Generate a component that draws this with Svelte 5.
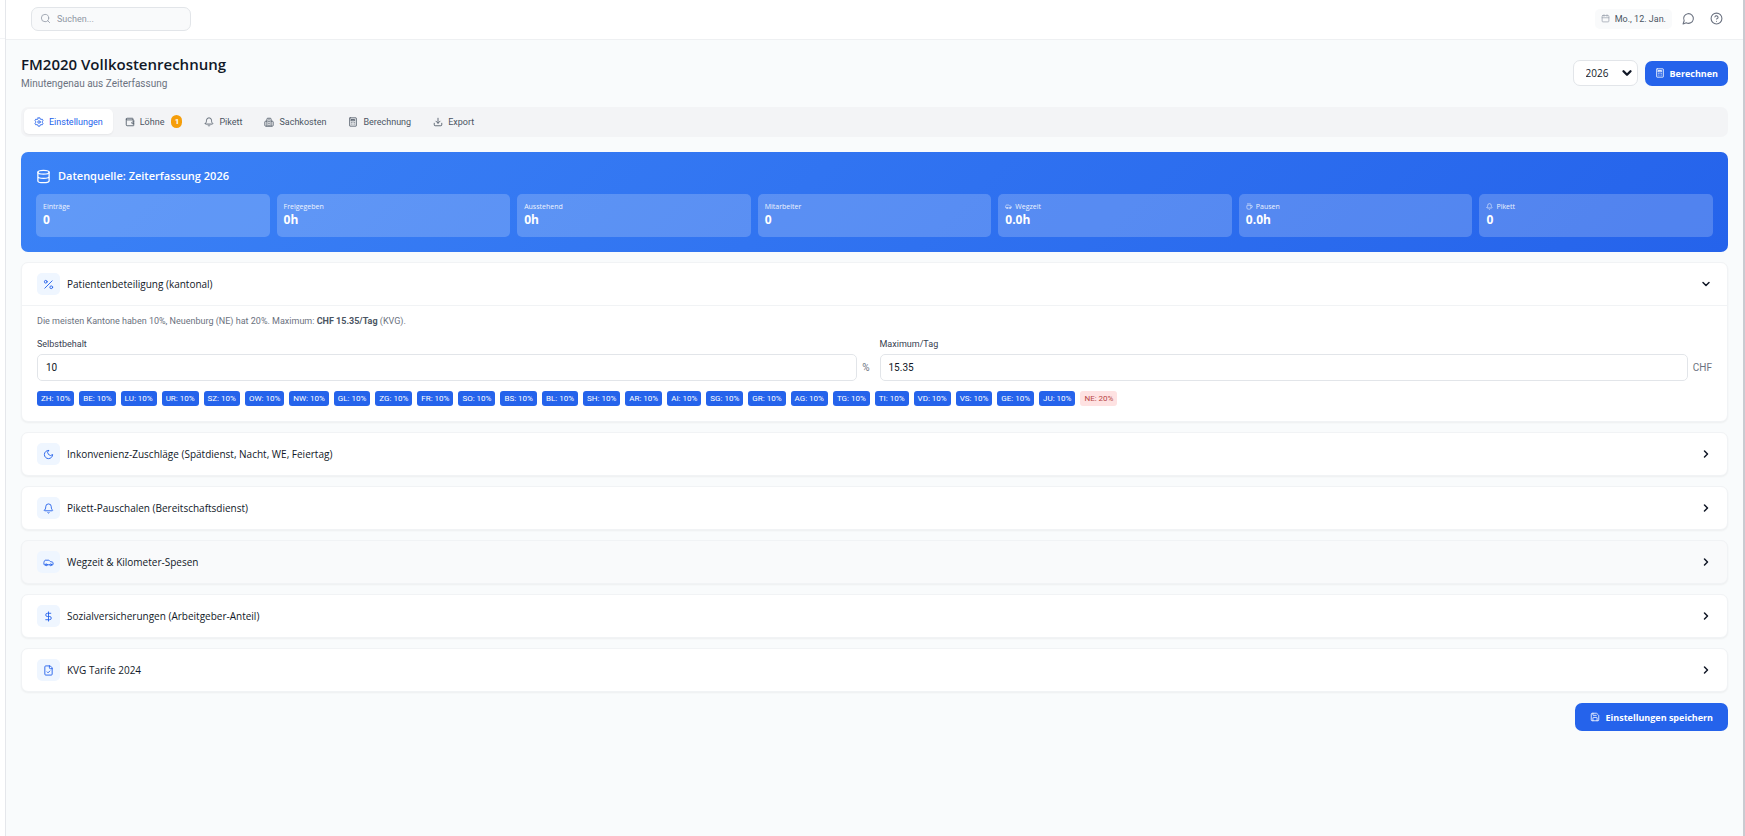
<script>
  const icons = {
    search: '<circle cx="11" cy="11" r="8"/><path d="m21 21-4.3-4.3"/>',
    calendar: '<rect x="3" y="4" width="18" height="17" rx="2"/><path d="M8 2v4M16 2v4M3 10h18"/>',
    chat: '<path d="M7.9 20A9 9 0 1 0 4 16.1L2 22Z"/>',
    help: '<circle cx="12" cy="12" r="10"/><path d="M9.1 9a3 3 0 0 1 5.8 1c0 2-3 3-3 3M12 17h.01"/>',
    calculator: '<rect x="4" y="2" width="16" height="20" rx="1"/><path d="M8 6h8v3H8zM8 13h.01M12 13h.01M16 13h.01M8 17h.01M12 17h.01M16 17h.01"/>',
    settings: '<path d="M9.700 2h4.600l.6 3 1.800 1 2.900-1 2.300 4-2.300 2v2l2.300 2-2.300 4-2.900-1-1.800 1-.6 3H9.700l-.6-3-1.800-1-2.900 1-2.300-4 2.300-2v-2L2.100 9l2.300-4 2.900 1 1.800-1z"/><circle cx="12" cy="12" r="3"/>',
    wallet: '<path d="M19 7V4a1 1 0 0 0-1-1H5a2 2 0 0 0 0 4h15a1 1 0 0 1 1 1v4h-3a2 2 0 0 0 0 4h3v4a1 1 0 0 1-1 1H5a2 2 0 0 1-2-2V5M21 12v4"/>',
    bell: '<path d="M10.3 21a1.9 1.9 0 0 0 3.4 0M3.3 15.3A1 1 0 0 0 4 17h16a1 1 0 0 0 .7-1.7C19.400 14 18 12.500 18 8A6 6 0 0 0 6 8c0 4.500-1.400 6-2.700 7.300"/>',
    building: '<path d="M7 22V5a2 2 0 0 1 2-2h6a2 2 0 0 1 2 2v17M7 10H4a2 2 0 0 0-2 2v8a2 2 0 0 0 2 2h16a2 2 0 0 0 2-2v-8a2 2 0 0 0-2-2h-3M11 7h2M11 11h2M11 15h2M12 19v3"/>',
    download: '<path d="M21 15v4a2 2 0 0 1-2 2H5a2 2 0 0 1-2-2v-4M7 10l5 5 5-5M12 15V3"/>',
    database: '<ellipse cx="12" cy="5" rx="9" ry="3"/><path d="M3 5v14a9 3 0 0 0 18 0V5M3 12a9 3 0 0 0 18 0"/>',
    car: '<path d="M19 17h2c.6 0 1-.4 1-1v-3c0-.9-.7-1.700-1.500-1.900L16 10s-1.300-1.400-2.200-2.300c-.5-.4-1.100-.7-1.800-.7H5c-.6 0-1.100.4-1.400.9l-1.400 2.900A3.700 3.700 0 0 0 2 12v4c0 .6.4 1 1 1h2M9 17h6"/><circle cx="7" cy="17" r="2"/><circle cx="17" cy="17" r="2"/>',
    coffee: '<path d="M10 2v2M14 2v2M6 2v2M16 8a1 1 0 0 1 1 1v8a4 4 0 0 1-4 4H7a4 4 0 0 1-4-4V9a1 1 0 0 1 1-1h14a4 4 0 1 1 0 8h-1"/>',
    percent: '<path d="M20 4 4 20"/><circle cx="6" cy="6" r="3"/><circle cx="18" cy="18" r="3"/>',
    moon: '<path d="M12 3a6 6 0 0 0 9 9 9 9 0 1 1-9-9Z"/>',
    dollar: '<path d="M12 2v20M17 5H9.500a3.500 3.500 0 0 0 0 7h5a3.500 3.500 0 0 1 0 7H6"/>',
    fileCheck: '<path d="M15 2H6a2 2 0 0 0-2 2v16a2 2 0 0 0 2 2h12a2 2 0 0 0 2-2V7ZM14 2v4a2 2 0 0 0 2 2h4M9 15l2 2 4-4"/>',
    save: '<path d="M15.200 3a2 2 0 0 1 1.400.6l3.800 3.800a2 2 0 0 1 .6 1.400V19a2 2 0 0 1-2 2H5a2 2 0 0 1-2-2V5a2 2 0 0 1 2-2ZM17 21v-7a1 1 0 0 0-1-1H8a1 1 0 0 0-1 1v7M7 3v4a1 1 0 0 0 1 1h7"/>',
    chevronDown: '<path d="m6 9 6 6 6-6"/>',
    chevronRight: '<path d="m9 18 6-6-6-6"/>',
  };

  const tabs = [
    { id: "settings", label: "Einstellungen", icon: "settings" },
    { id: "wages", label: "Löhne", icon: "wallet", badge: 1 },
    { id: "oncall", label: "Pikett", icon: "bell" },
    { id: "costs", label: "Sachkosten", icon: "building" },
    { id: "calc", label: "Berechnung", icon: "calculator" },
    { id: "export", label: "Export", icon: "download" },
  ];

  const stats = [
    { label: "Einträge", value: "0" },
    { label: "Freigegeben", value: "0h" },
    { label: "Ausstehend", value: "0h" },
    { label: "Mitarbeiter", value: "0" },
    { label: "Wegzeit", value: "0.0h", icon: "car" },
    { label: "Pausen", value: "0.0h", icon: "coffee" },
    { label: "Pikett", value: "0", icon: "bell" },
  ];

  const cantons = [
    "ZH", "BE", "LU", "UR", "SZ", "OW", "NW", "GL", "ZG", "FR", "SO", "BS", "BL",
    "SH", "AR", "AI", "SG", "GR", "AG", "TG", "TI", "VD", "VS", "GE", "JU", "NE",
  ].map((code) => ({ code, rate: code === "NE" ? 20 : 10 }));

  const sections = [
    { id: "patient", title: "Patientenbeteiligung (kantonal)", icon: "percent" },
    { id: "surcharge", title: "Inkonvenienz-Zuschläge (Spätdienst, Nacht, WE, Feiertag)", icon: "moon" },
    { id: "oncall", title: "Pikett-Pauschalen (Bereitschaftsdienst)", icon: "bell" },
    { id: "travel", title: "Wegzeit & Kilometer-Spesen", icon: "car", muted: true },
    { id: "social", title: "Sozialversicherungen (Arbeitgeber-Anteil)", icon: "dollar" },
    { id: "kvg", title: "KVG Tarife 2024", icon: "fileCheck" },
  ];

  let activeTab = $state("settings");
  let openSection = $state("patient");
  let year = $state("2026");
  let deductible = $state("10");
  let maxPerDay = $state("15.35");

  function toggle(id) {
    openSection = openSection === id ? null : id;
  }
</script>

{#snippet icon(name)}
  <svg class="icon" viewBox="0 0 24 24" aria-hidden="true">{@html icons[name]}</svg>
{/snippet}

<div class="shell">
  <aside class="rail"><div class="rail-head"></div></aside>

  <div class="content">
    <header class="topbar">
      <label class="search">
        {@render icon("search")}
        <input type="search" placeholder="Suchen..." aria-label="Suchen" />
      </label>
      <div class="topbar-right">
        <div class="date">{@render icon("calendar")}<span>Mo., 12. Jan.</span></div>
        <button class="icon-btn" aria-label="Nachrichten">{@render icon("chat")}</button>
        <button class="icon-btn" aria-label="Hilfe">{@render icon("help")}</button>
      </div>
    </header>

    <main>
      <div class="page-head">
        <div>
          <h1>FM2020 Vollkostenrechnung</h1>
          <p class="subtitle">Minutengenau aus Zeiterfassung</p>
        </div>
        <div class="actions">
          <div class="year">
            <select bind:value={year} aria-label="Jahr">
              <option>2025</option>
              <option>2026</option>
            </select>
            {@render icon("chevronDown")}
          </div>
          <button class="primary">{@render icon("calculator")}Berechnen</button>
        </div>
      </div>

      <nav class="tabs">
        {#each tabs as tab}
          <button class="tab" class:active={activeTab === tab.id} onclick={() => (activeTab = tab.id)}>
            {@render icon(tab.icon)}
            <span>{tab.label}</span>
            {#if tab.badge}
              <span class="count">{tab.badge}</span>
            {/if}
          </button>
        {/each}
      </nav>

      <section class="source">
        <h2>{@render icon("database")}Datenquelle: Zeiterfassung {year}</h2>
        <div class="stats">
          {#each stats as stat}
            <div class="stat">
              <div class="stat-label">
                {#if stat.icon}{@render icon(stat.icon)}{/if}
                {stat.label}
              </div>
              <div class="stat-value">{stat.value}</div>
            </div>
          {/each}
        </div>
      </section>

      <div class="cards">
        {#each sections as section}
          <section class="card" class:muted={section.muted}>
            <button class="card-head" aria-expanded={openSection === section.id} onclick={() => toggle(section.id)}>
              <span class="card-icon">{@render icon(section.icon)}</span>
              <span class="card-title">{section.title}</span>
              <span class="chevron">{@render icon(openSection === section.id ? "chevronDown" : "chevronRight")}</span>
            </button>

            {#if section.id === "patient" && openSection === "patient"}
              <div class="card-body">
                <p class="hint">
                  Die meisten Kantone haben 10%, Neuenburg (NE) hat 20%. Maximum: <strong>CHF 15.35/Tag</strong> (KVG).
                </p>
                <div class="fields">
                  <div class="field">
                    <label for="deductible">Selbstbehalt</label>
                    <div class="field-row">
                      <input id="deductible" type="text" bind:value={deductible} />
                      <span>%</span>
                    </div>
                  </div>
                  <div class="field">
                    <label for="max-day">Maximum/Tag</label>
                    <div class="field-row">
                      <input id="max-day" type="text" bind:value={maxPerDay} />
                      <span>CHF</span>
                    </div>
                  </div>
                </div>
                <div class="cantons">
                  {#each cantons as c}
                    <span class="canton" class:high={c.rate > 10}>{c.code}: {c.rate}%</span>
                  {/each}
                </div>
              </div>
            {/if}
          </section>
        {/each}
      </div>

      <div class="footer">
        <button class="primary save">{@render icon("save")}Einstellungen speichern</button>
      </div>
    </main>
  </div>
</div>

<style>
  :global(body) {
    background: #f9fafb;
  }

  .shell {
    display: flex;
    min-height: 100vh;
    box-sizing: border-box;
    border-right: 2px solid #c9cbd1;
    background: #f9fbfc;
    color: #111827;
    font-family: "Open Sans", "Noto Sans", sans-serif;
    font-size: 10px;
  }

  .shell :global(*) {
    box-sizing: border-box;
  }

  button,
  input,
  select {
    font: inherit;
    color: inherit;
    margin: 0;
  }

  button {
    border: 0;
    padding: 0;
    background: none;
    cursor: pointer;
  }

  h1,
  h2,
  p {
    margin: 0;
  }

  .icon {
    width: 10px;
    height: 10px;
    flex-shrink: 0;
    fill: none;
    stroke: currentColor;
    stroke-width: 2;
    stroke-linecap: round;
    stroke-linejoin: round;
  }

  .rail {
    width: 6px;
    flex-shrink: 0;
    background: #fff;
    border-right: 1px solid #e5e7eb;
  }

  .rail-head {
    height: 39px;
    border-bottom: 1px solid #f3f4f6;
  }

  .content {
    flex: 1;
    min-width: 0;
  }

  .topbar {
    display: flex;
    justify-content: space-between;
    align-items: center;
    height: 40px;
    padding: 0 15px 2px 25px;
    background: #fff;
    border-bottom: 1px solid #eef0f2;
  }

  .search {
    display: flex;
    align-items: center;
    gap: 6px;
    width: 160px;
    height: 24px;
    padding: 0 8px;
    background: #f9fafb;
    border: 1px solid #e2e5e9;
    border-radius: 7px;
    color: #9ca3af;
  }

  .search input {
    width: 100%;
    border: 0;
    padding: 0;
    outline: none;
    background: none;
    font-family: Roboto, sans-serif;
    font-size: 9px;
  }

  .search input::placeholder {
    color: #8f97a3;
  }

  .topbar-right {
    display: flex;
    align-items: center;
    gap: 5px;
    color: #6b7280;
  }

  .date {
    display: flex;
    align-items: center;
    gap: 5px;
    height: 20px;
    padding: 0 6px;
    background: #f9fafb;
    border-radius: 5px;
    font: 9px Roboto, sans-serif;
    color: #4b5563;
  }

  .date .icon {
    width: 9px;
    height: 9px;
    color: #9ca3af;
  }

  .icon-btn {
    display: grid;
    place-items: center;
    width: 23px;
    height: 23px;
    color: #6b7280;
  }

  .icon-btn .icon {
    width: 13px;
    height: 13px;
  }

  .search .icon,
  .card-icon .icon {
    width: 11px;
    height: 11px;
  }

  main {
    padding: 15px;
  }

  .page-head {
    display: flex;
    justify-content: space-between;
    align-items: center;
    margin-bottom: 16px;
  }

  h1 {
    font-size: 15px;
    line-height: 18px;
    font-weight: 600;
  }

  .subtitle {
    margin-top: 4px;
    font: 10px/14px Roboto, sans-serif;
    color: #6b7280;
  }

  .actions {
    display: flex;
    align-items: center;
    gap: 7px;
  }

  .year {
    position: relative;
  }

  .year select {
    appearance: none;
    display: block;
    width: 65px;
    height: 26px;
    padding: 0 12px;
    background: #fff;
    border: 1px solid #e2e5e9;
    border-radius: 7px;
  }

  .year .icon {
    position: absolute;
    top: 6px;
    right: 4px;
    width: 14px;
    height: 14px;
    stroke-width: 4;
    pointer-events: none;
  }

  .primary {
    display: flex;
    align-items: center;
    gap: 5px;
    height: 25px;
    padding: 0 10px;
    background: #2563eb;
    border-radius: 7px;
    font-size: 9px;
    font-weight: 700;
    color: #fff;
  }

  .save {
    height: 28px;
    gap: 6px;
    padding: 0 15px;
  }

  .tabs {
    display: flex;
    gap: 2px;
    height: 30px;
    padding: 2px 3px 3px;
    margin-bottom: 15px;
    background: #f3f4f6;
    border-radius: 7px;
  }

  .tab {
    display: flex;
    align-items: center;
    gap: 5px;
    padding: 0 10px;
    border-radius: 5px;
    font: 9px Roboto, sans-serif;
    color: #4b5563;
  }

  .tab.active {
    background: #fff;
    color: #2563eb;
    box-shadow: 0 1px 2px rgba(0, 0, 0, 0.06);
  }

  .count {
    width: 11px;
    height: 13px;
    margin-left: 2px;
    background: #f59e0b;
    border-radius: 6px;
    font-size: 8px;
    line-height: 13px;
    font-weight: 700;
    text-align: center;
    color: #fff;
  }

  .source {
    padding: 15px;
    margin-bottom: 10px;
    background: linear-gradient(135deg, #3b82f6, #2563eb);
    border-radius: 7px;
    color: #fff;
  }

  h2 {
    display: flex;
    align-items: center;
    gap: 7px;
    margin-bottom: 9px;
    font-size: 11px;
    line-height: 18px;
    font-weight: 600;
  }

  h2 .icon {
    width: 15px;
    height: 15px;
  }

  .stats {
    display: grid;
    grid-template-columns: repeat(7, 1fr);
    gap: 7px;
  }

  .stat {
    padding: 7px 7px 9px;
    background: rgba(255, 255, 255, 0.2);
    border-radius: 5px;
  }

  .stat-label {
    display: flex;
    align-items: center;
    gap: 3px;
    font-size: 7px;
    line-height: 11px;
    opacity: 0.9;
  }

  .stat-label .icon {
    width: 7px;
    height: 7px;
  }

  .stat-value {
    font-size: 12px;
    line-height: 16px;
    font-weight: 700;
  }

  .cards {
    display: grid;
    gap: 10px;
  }

  .card {
    background: #fff;
    border: 1px solid #f1f3f5;
    border-radius: 7px;
    box-shadow: 0 1px 2px rgba(0, 0, 0, 0.05);
    overflow: hidden;
  }

  .card.muted {
    background: #f9fafb;
  }

  .card-head {
    display: flex;
    align-items: center;
    gap: 7px;
    width: 100%;
    padding: 10px 15px;
    text-align: left;
  }

  .card-icon {
    display: grid;
    place-items: center;
    width: 23px;
    height: 22px;
    background: #eff6ff;
    border-radius: 5px;
    color: #2563eb;
  }

  .card-title {
    flex: 1;
    font-weight: 500;
  }

  .chevron {
    display: flex;
  }

  .chevron .icon {
    width: 12px;
    height: 12px;
    stroke-width: 3;
  }

  .card-body {
    padding: 9px 15px 15px;
    border-top: 1px solid #f1f3f5;
    font-family: Roboto, sans-serif;
    font-size: 9px;
  }

  .hint {
    margin-bottom: 11px;
    line-height: 12px;
    color: #6b7280;
  }

  .hint strong {
    color: #4b5563;
  }

  .fields {
    display: grid;
    grid-template-columns: 1fr 1fr;
    gap: 10px;
    margin-bottom: 10px;
  }

  .field label {
    display: block;
    margin-bottom: 3px;
    line-height: 13px;
    color: #374151;
  }

  .field-row {
    display: flex;
    align-items: center;
    gap: 5px;
    font-size: 10px;
    color: #6b7280;
  }

  .field-row input {
    flex: 1;
    min-width: 0;
    height: 27px;
    padding: 0 8px;
    background: #fff;
    border: 1px solid #e2e5e9;
    border-radius: 5px;
    color: #111827;
  }

  .cantons {
    display: flex;
    flex-wrap: wrap;
    gap: 5px;
  }

  .canton {
    padding: 0 4px;
    background: #2563eb;
    border-radius: 3px;
    font-size: 8px;
    line-height: 15px;
    color: #fff;
  }

  .canton.high {
    background: #fee2e2;
    color: #b84545;
  }

  .footer {
    display: flex;
    justify-content: flex-end;
    margin-top: 11px;
  }
</style>
